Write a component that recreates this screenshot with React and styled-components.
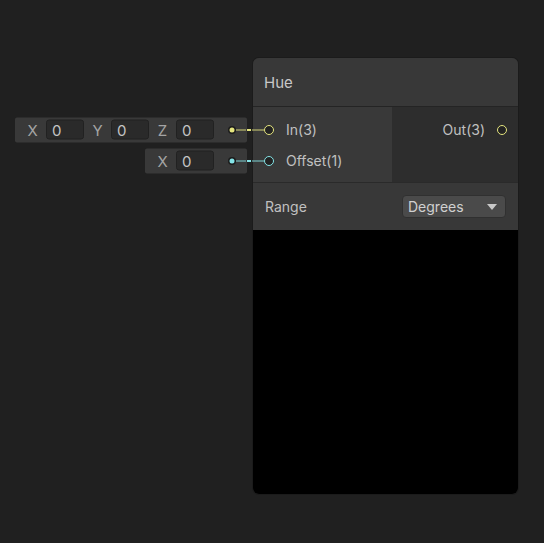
import React from "react";
import styled, { createGlobalStyle } from "styled-components";

const GlobalStyle = createGlobalStyle`
  html, body {
    margin: 0;
    padding: 0;
    background: #202020;
  }
  body {
    font-family: Inter, "Noto Sans", sans-serif;
    color: #c4c4c4;
  }
`;

const PORT_COLORS = {
  vector3: "#e4e47e",
  vector1: "#84e4e7",
};

const Canvas = styled.div`
  position: relative;
  width: 544px;
  height: 543px;
  overflow: hidden;
  background: #202020;
`;

const Node = styled.div`
  position: absolute;
  left: ${(p) => p.x}px;
  top: ${(p) => p.y}px;
  width: 265px;
  height: 436px;
  display: flex;
  flex-direction: column;
  border-radius: 6px;
  background: #2d2d2d;
  box-shadow: 0 0 0 1px #1b1b1b;
`;

const Header = styled.div`
  height: 48px;
  display: flex;
  align-items: center;
  padding-left: 11px;
  background: #383838;
  border-radius: 6px 6px 0 0;
  border-bottom: 1px solid #242424;
  font-size: 15px;
  color: #c8c8c8;
`;

const Ports = styled.div`
  display: flex;
  height: 75px;
  border-bottom: 1px solid #2a2a2a;
`;

const InputColumn = styled.div`
  width: 139px;
  background: #393939;
  padding-top: 7px;
  box-sizing: border-box;
`;

const OutputColumn = styled.div`
  flex: 1;
  background: #2d2d2d;
  padding-top: 7px;
  box-sizing: border-box;
`;

const PortRow = styled.div`
  position: relative;
  height: 31px;
  display: flex;
  align-items: center;
  justify-content: ${(p) => (p.out ? "flex-end" : "flex-start")};
  gap: 12px;
  padding: ${(p) => (p.out ? "0 11px 0 0" : "0 0 0 11px")};
  font-size: 14px;
  color: #c0c0c0;
`;

const PortCircle = styled.span`
  width: 8px;
  height: 8px;
  border-radius: 50%;
  border: 1px solid ${(p) => p.color};
  background: #232323;
  flex: none;
`;

const FieldBox = styled.div`
  position: absolute;
  right: calc(100% + 6px);
  top: 50%;
  transform: translateY(-50%);
  height: 25px;
  display: flex;
  align-items: center;
  padding: 0 33px 0 4px;
  background: #393939;
  border-radius: 2px;
`;

const AxisLabel = styled.span`
  width: 27px;
  text-align: center;
  font-size: 15px;
  color: #a4a4a4;
`;

const NumberField = styled.div`
  width: 38px;
  height: 20px;
  box-sizing: border-box;
  display: flex;
  align-items: center;
  padding-left: 5px;
  background: #2a2a2a;
  border: 1px solid #212121;
  border-radius: 3px;
  font-size: 15px;
  color: #c4c4c4;
`;

const Wire = styled.svg`
  position: absolute;
  left: -27px;
  top: 50%;
  transform: translateY(-50%);
  pointer-events: none;
`;

const RangeRow = styled.div`
  height: 47px;
  display: flex;
  align-items: center;
  justify-content: space-between;
  padding: 0 12px 0 12px;
  background: #383838;
  font-size: 14px;
  color: #c0c0c0;
`;

const Dropdown = styled.div`
  width: 104px;
  height: 23px;
  box-sizing: border-box;
  display: flex;
  align-items: center;
  justify-content: space-between;
  padding: 0 8px 0 5px;
  background: #4a4a4a;
  border: 1px solid #303030;
  border-radius: 4px;
  font-size: 14px;
  color: #d0d0d0;
`;

const Preview = styled.div`
  flex: 1;
  background: #000;
  border-radius: 0 0 6px 6px;
`;

function Connection({ color }) {
  return (
    <Wire width="44" height="12" viewBox="0 0 44 12">
      <line x1="10" y1="6" x2="20" y2="6" stroke={color} strokeOpacity="0.45" strokeWidth="2" />
      <line x1="21" y1="6" x2="25" y2="6" stroke={color} strokeWidth="2" />
      <line x1="26" y1="6" x2="38" y2="6" stroke={color} strokeOpacity="0.45" strokeWidth="2" />
      <circle cx="6" cy="6" r="4" fill="#1c1c1c" />
      <circle cx="6" cy="6" r="2.5" fill={color} />
    </Wire>
  );
}

function InputPort({ label, color, axes }) {
  return (
    <PortRow>
      <FieldBox>
        {axes.map((a) => (
          <React.Fragment key={a}>
            <AxisLabel>{a}</AxisLabel>
            <NumberField>0</NumberField>
          </React.Fragment>
        ))}
      </FieldBox>
      <Connection color={color} />
      <PortCircle color={color} />
      <span>{label}</span>
    </PortRow>
  );
}

export default function App() {
  return (
    <>
      <GlobalStyle />
      <Canvas>
        <Node x={253} y={58}>
          <Header>Hue</Header>
          <Ports>
            <InputColumn>
              <InputPort label="In(3)" color={PORT_COLORS.vector3} axes={["X", "Y", "Z"]} />
              <InputPort label="Offset(1)" color={PORT_COLORS.vector1} axes={["X"]} />
            </InputColumn>
            <OutputColumn>
              <PortRow out>
                <span>Out(3)</span>
                <PortCircle color={PORT_COLORS.vector3} />
              </PortRow>
            </OutputColumn>
          </Ports>
          <RangeRow>
            <span>Range</span>
            <Dropdown>
              <span>Degrees</span>
              <svg width="10" height="6" viewBox="0 0 10 6">
                <path d="M0 0 L10 0 L5 6 Z" fill="#c8c8c8" />
              </svg>
            </Dropdown>
          </RangeRow>
          <Preview />
        </Node>
      </Canvas>
    </>
  );
}
